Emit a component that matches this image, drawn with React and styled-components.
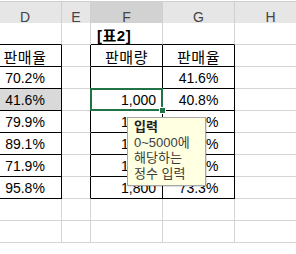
import React from "react";
import styled, { createGlobalStyle, css } from "styled-components";

const Global = createGlobalStyle`
  html, body { margin: 0; padding: 0; background: #fff; overflow: hidden; }
  body { font-family: "Liberation Sans", "Noto Sans CJK KR", sans-serif; }
`;

const Viewport = styled.div`
  width: 296px;
  height: 254px;
  overflow: hidden;
  padding-top: 1px;
  box-sizing: border-box;
`;

const Sheet = styled.div`
  display: grid;
  grid-template-columns: 73px 29px 72px 72px 72px;
  grid-auto-rows: 22px;
  margin-left: -11px;
`;

const ColHead = styled.div`
  height: 32px;
  box-sizing: border-box;
  border-top: 1px solid #cfcfcf;
  border-right: 1px solid #d0d0d0;
  border-bottom: ${(p) => (p.$active ? "2px solid #217346" : "1px solid #bdbdbd")};
  background: ${(p) => (p.$active ? "#d2d2d2" : "#e6e6e6")};
  color: #444;
  font-size: 14px;
  display: flex;
  align-items: center;
  justify-content: center;
  padding-top: ${(p) => (p.$active ? "1px" : "0")};
`;

const Cell = styled.div`
  position: relative;
  box-sizing: border-box;
  border-right: 1px solid ${(p) => (p.$rb ? "#000" : "#d4d4d4")};
  border-bottom: 1px solid ${(p) => (p.$bb ? "#000" : "#d4d4d4")};
  background: ${(p) => p.$bg || "#fff"};
  color: #000;
  font-size: ${(p) => (p.$ko ? "15px" : "14px")};
  letter-spacing: ${(p) => (p.$ko ? "0.5px" : "0")};
  font-weight: ${(p) => (p.$bold ? 700 : 400)};
  display: flex;
  align-items: center;
  white-space: nowrap;
  padding: 1px 6px 0 6px;
  ${(p) =>
    p.$align === "right" &&
    css`
      justify-content: flex-end;
    `}
  ${(p) =>
    p.$align === "center" &&
    css`
      justify-content: center;
    `}
`;

const Selection = styled.div`
  position: absolute;
  left: -1px;
  top: -1px;
  right: -1px;
  bottom: -1px;
  border: 2px solid #217346;
  pointer-events: none;
  z-index: 5;
`;

const FillHandle = styled.div`
  position: absolute;
  right: -4px;
  bottom: -4px;
  width: 5px;
  height: 5px;
  background: #217346;
  border: 1px solid #fff;
  z-index: 6;
`;

const Tip = styled.div`
  position: absolute;
  left: 36px;
  top: 28px;
  width: 79px;
  height: 69px;
  box-sizing: border-box;
  background: #ffffe1;
  border: 1px solid #a6a6a6;
  box-shadow: 1px 1px 1px rgba(0, 0, 0, 0.12);
  padding: 1px 0 0 6px;
  z-index: 10;
  font-size: 13px;
  line-height: 15.5px;
  color: #3c3c3c;
  white-space: nowrap;
`;

const TipTitle = styled.div`
  font-weight: 700;
  color: #222;
`;

const TipLine = styled.div``;

const rowsD = ["70.2%", "41.6%", "79.9%", "89.1%", "71.9%", "95.8%"];
const rowsF = ["", "1,000", "1,200", "1,500", "1,300", "1,800"];
const rowsG = ["41.6%", "40.8%", "55.2%", "62.7%", "48.9%", "73.3%"];

export default function App() {
  return (
    <>
      <Global />
      <Viewport>
        <Sheet>
          <ColHead>D</ColHead>
          <ColHead>E</ColHead>
          <ColHead $active>F</ColHead>
          <ColHead>G</ColHead>
          <ColHead>H</ColHead>

          <Cell $bb />
          <Cell />
          <Cell $bb $bold $ko>[표2]</Cell>
          <Cell $bb />
          <Cell />

          <Cell $rb $bb $ko $align="center">판매율</Cell>
          <Cell $rb />
          <Cell $rb $bb $ko $align="center">판매량</Cell>
          <Cell $rb $bb $ko $align="center">판매율</Cell>
          <Cell />

          {rowsD.map((d, i) => (
            <React.Fragment key={i}>
              <Cell $rb $bb $align="center" $bg={i === 1 ? "#d9d9d9" : undefined}>
                {d}
              </Cell>
              <Cell $rb />
              <Cell $rb $bb $align="right">
                {rowsF[i]}
                {i === 1 && (
                  <>
                    <Selection />
                    <FillHandle />
                    <Tip>
                      <TipTitle>입력</TipTitle>
                      <TipLine>0~5000에</TipLine>
                      <TipLine>해당하는</TipLine>
                      <TipLine>정수 입력</TipLine>
                    </Tip>
                  </>
                )}
              </Cell>
              <Cell $rb $bb $align="center">{rowsG[i]}</Cell>
              <Cell />
            </React.Fragment>
          ))}

          {[0, 1].map((r) => (
            <React.Fragment key={`e${r}`}>
              <Cell />
              <Cell />
              <Cell />
              <Cell />
              <Cell />
            </React.Fragment>
          ))}
        </Sheet>
      </Viewport>
    </>
  );
}
